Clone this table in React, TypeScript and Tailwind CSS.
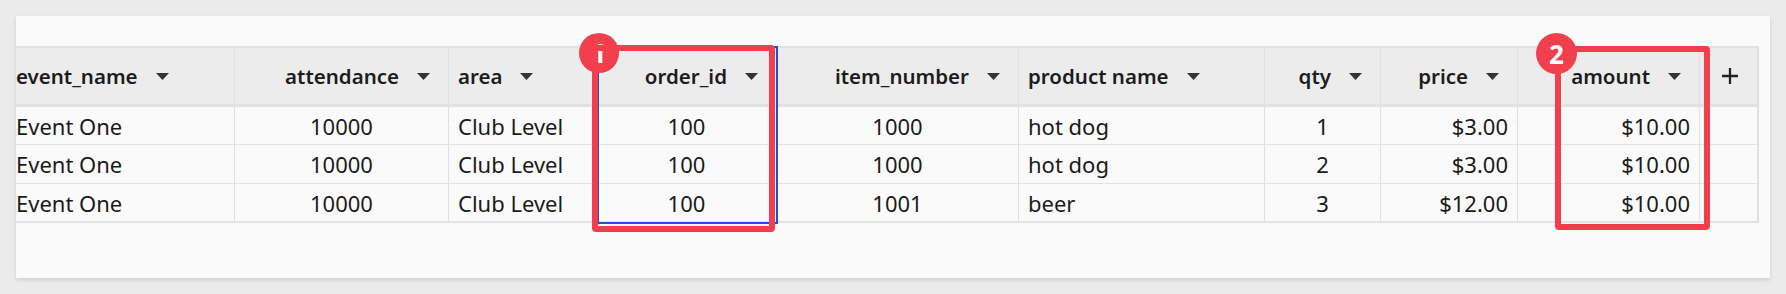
import React from "react";

type Align = "left" | "center" | "right";

const cols: { name: string; align: Align; headAlign: "left" | "right"; first?: boolean }[] = [
  { name: "event_name", align: "left", headAlign: "left", first: true },
  { name: "attendance", align: "center", headAlign: "right" },
  { name: "area", align: "left", headAlign: "left" },
  { name: "order_id", align: "center", headAlign: "right" },
  { name: "item_number", align: "center", headAlign: "right" },
  { name: "product name", align: "left", headAlign: "left" },
  { name: "qty", align: "center", headAlign: "right" },
  { name: "price", align: "right", headAlign: "right" },
  { name: "amount", align: "right", headAlign: "right" },
];

const rows = [
  ["Event One", "10000", "Club Level", "100", "1000", "hot dog", "1", "$3.00", "$10.00"],
  ["Event One", "10000", "Club Level", "100", "1000", "hot dog", "2", "$3.00", "$10.00"],
  ["Event One", "10000", "Club Level", "100", "1001", "beer", "3", "$12.00", "$10.00"],
];

function Caret() {
  return (
    <svg width="13" height="7" viewBox="0 0 13 7" className="shrink-0">
      <path d="M0 0H13L6.5 7Z" fill="#333333" />
    </svg>
  );
}

function HeaderCell({ c }: { c: (typeof cols)[number] }) {
  const justify = c.headAlign === "right" ? "justify-end pr-[18px]" : c.first ? "justify-start pl-0" : "justify-start pl-[9px]";
  return (
    <div className={`flex items-center gap-[18px] border-r border-[#e0e0e0] ${justify}`}>
      <span className="font-semibold text-[20.5px] leading-none text-[#1c1c1c] whitespace-nowrap">{c.name}</span>
      <Caret />
    </div>
  );
}

function BodyCell({ v, c }: { v: string; c: (typeof cols)[number] }) {
  const a =
    c.align === "center"
      ? "justify-center"
      : c.align === "right"
      ? "justify-end pr-[9px]"
      : c.first
      ? "justify-start pl-0"
      : "justify-start pl-[9px]";
  return (
    <div className={`flex items-center border-r border-[#e0e0e0] ${a}`}>
      <span className="text-[22px] leading-none text-[#1a1a1a] whitespace-nowrap">{v}</span>
    </div>
  );
}

export default function App() {
  const grid =
    "grid grid-cols-[219px_214px_148px_180px_242px_246px_116px_137px_182px_59px]";
  return (
    <div className="w-[1786px] h-[294px] bg-[#ebebeb] pt-[16px] pl-[16px] [font-family:'Noto_Sans',sans-serif]">
      <div className="relative w-[1754px] h-[262px] bg-[#fafafa] shadow-[0_2px_4px_rgba(0,0,0,0.12)] pt-[30px]">
        <div className="w-[1743px] border-r-2 border-[#e0e0e0]">
          {/* header */}
          <div className={`${grid} h-[61px] bg-[#ececec] border-t-2 border-b-[3px] border-[#e2e2e2]`}>
            {cols.map((c) => (
              <HeaderCell key={c.name} c={c} />
            ))}
            <div className="flex items-center justify-center">
              <svg width="16" height="16" viewBox="0 0 16 16">
                <path d="M8 0V16M0 8H16" stroke="#222" strokeWidth="2.3" />
              </svg>
            </div>
          </div>
          {/* body */}
          {rows.map((r, i) => (
            <div
              key={i}
              className={`${grid} ${i === 0 ? "h-[38px]" : "h-[39px]"} bg-[#fafafa] ${i === rows.length - 1 ? "border-b-2" : "border-b"} border-[#e3e3e3]`}
            >
              {r.map((v, j) => (
                <BodyCell key={j} v={v} c={cols[j]} />
              ))}
              <div />
            </div>
          ))}
        </div>

        {/* selected column blue outline */}
        <div className="absolute left-[581px] top-[30px] w-[181px] h-[178px] border-2 border-[#1f4fd6] pointer-events-none" />

        {/* badge 1 (partly hidden under box 1) */}
        <div className="absolute left-[563px] top-[17px] w-[40px] h-[40px] rounded-full bg-[#f23f4e] flex items-center justify-center">
          <span className="text-white font-bold text-[26px] leading-none">1</span>
        </div>
        {/* annotation box 1 */}
        <div className="absolute left-[576px] top-[29px] w-[183px] h-[187px] border-[6px] border-[#f23f4e] rounded-[4px] pointer-events-none" />

        {/* annotation box 2 */}
        <div className="absolute left-[1539px] top-[30px] w-[155px] h-[184px] border-[6px] border-[#f23f4e] rounded-[4px] pointer-events-none" />
        {/* badge 2 */}
        <div className="absolute left-[1520px] top-[17px] w-[41px] h-[41px] rounded-full bg-[#f23f4e] flex items-center justify-center">
          <span className="text-white font-bold text-[26px] leading-none">2</span>
        </div>
      </div>
    </div>
  );
}
